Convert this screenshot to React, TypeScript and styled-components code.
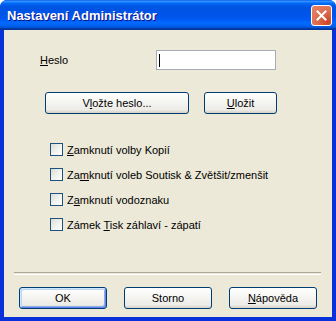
import { FC } from 'react';
import styled, { createGlobalStyle } from 'styled-components';

const GlobalStyle = createGlobalStyle`
  html, body {
    margin: 0;
    padding: 0;
    background: #ffffff;
  }
  body {
    font-family: 'Liberation Sans', Arial, sans-serif;
    font-size: 11px;
    color: #000;
  }
`;

const StyledWindow = styled.div`
  width: 336px;
  height: 321px;
  display: flex;
  flex-direction: column;
  box-sizing: border-box;
  border-radius: 7px 7px 0 0;
  overflow: hidden;
  background: #0831d9;
`;

const StyledTitleBar = styled.div`
  height: 30px;
  flex: none;
  display: flex;
  align-items: center;
  justify-content: space-between;
  padding: 0 4px 0 7px;
  background: linear-gradient(
    to bottom,
    #0058ee 0%,
    #3a93ff 4%,
    #288eff 6%,
    #127dff 8%,
    #036ffc 10%,
    #0262ee 14%,
    #0057e5 20%,
    #0054e3 24%,
    #0055eb 56%,
    #005bf5 66%,
    #026afe 76%,
    #0062ef 86%,
    #0052d6 92%,
    #0040ab 94%,
    #003092 100%
  );
`;

const StyledTitle = styled.div`
  color: #fff;
  font-family: 'Liberation Sans', Arial, sans-serif;
  font-weight: bold;
  font-size: 13px;
  text-shadow: 1px 1px 0 #0f1089;
  margin-top: 1px;
`;

const StyledClose = styled.div`
  width: 21px;
  height: 21px;
  box-sizing: border-box;
  border: 1px solid #fff;
  border-radius: 3px;
  background: radial-gradient(circle at 85% 85%, #cc4626 0%, #dc6a4c 45%, #e6866c 100%);
  display: flex;
  align-items: center;
  justify-content: center;
  margin-top: 1px;
`;

const StyledBody = styled.div`
  flex: 1;
  display: flex;
  flex-direction: column;
  margin: 0 4px 4px 4px;
  background: #ece9d8;
`;

const StyledPasswordRow = styled.div`
  display: flex;
  align-items: center;
  margin-top: 20px;
  padding-left: 36px;
`;

const StyledLabel = styled.div`
  width: 116px;
`;

const StyledTextBox = styled.div`
  width: 120px;
  height: 20px;
  box-sizing: border-box;
  border: 1px solid #a5acb2;
  background: #fff;
  padding: 3px 0 0 2px;
`;

const StyledCaret = styled.div`
  width: 1px;
  height: 13px;
  background: #000;
`;

const StyledButtonRow = styled.div<{ $top: number; $left: number; $gap: number }>`
  display: flex;
  margin-top: ${(p) => p.$top}px;
  padding-left: ${(p) => p.$left}px;
  gap: ${(p) => p.$gap}px;
`;

const StyledButton = styled.div<{ $width: number; $default?: boolean }>`
  width: ${(p) => p.$width}px;
  height: 22px;
  box-sizing: border-box;
  border: 1px solid #003c74;
  border-radius: 3px;
  background: linear-gradient(to bottom, #ffffff 0%, #f6f6f3 40%, #ecebe6 85%, #d6d0c5 100%);
  display: flex;
  align-items: center;
  justify-content: center;
  box-shadow: ${(p) =>
    p.$default
      ? 'inset 1px 1px 0 #cee7ff, inset -1px -1px 0 #6982ee, inset 2px 2px 0 #bcd4f6, inset -2px -2px 0 #89ade4'
      : 'none'};
`;

const StyledChecks = styled.div`
  display: flex;
  flex-direction: column;
  margin-top: 29px;
  padding-left: 46px;
  gap: 12px;
`;

const StyledCheckRow = styled.div`
  display: flex;
  align-items: center;
  height: 13px;
`;

const StyledBox = styled.div`
  width: 13px;
  height: 13px;
  box-sizing: border-box;
  border: 1px solid #1c5180;
  background: linear-gradient(135deg, #dcdcd7 0%, #f2f2ee 55%, #ffffff 100%);
  margin-right: 4px;
  flex: none;
`;

const StyledSeparator = styled.div`
  margin: auto 11px 0 10px;
  height: 1px;
  border-top: 1px solid #aca899;
  border-bottom: 1px solid #ffffff;
`;

const StyledFooter = styled.div`
  display: flex;
  gap: 17px;
  padding: 12px 0 8px 15px;
`;

const Key: FC<{ children: string }> = ({ children }) => <u>{children}</u>;

const CloseIcon: FC = () => (
  <svg width="11" height="11" viewBox="0 0 11 11">
    <path d="M1.5 1.5 L9.5 9.5 M9.5 1.5 L1.5 9.5" stroke="#fff" strokeWidth="2" strokeLinecap="square" />
  </svg>
);

const App: FC = () => {
  return (
    <>
      <GlobalStyle />
      <StyledWindow>
        <StyledTitleBar>
          <StyledTitle>Nastavení Administrátor</StyledTitle>
          <StyledClose>
            <CloseIcon />
          </StyledClose>
        </StyledTitleBar>
        <StyledBody>
          <StyledPasswordRow>
            <StyledLabel>
              <Key>H</Key>eslo
            </StyledLabel>
            <StyledTextBox>
              <StyledCaret />
            </StyledTextBox>
          </StyledPasswordRow>

          <StyledButtonRow $top={22} $left={41} $gap={15}>
            <StyledButton $width={144}>
              V<Key>l</Key>ožte heslo...
            </StyledButton>
            <StyledButton $width={73}>
              <Key>U</Key>ložit
            </StyledButton>
          </StyledButtonRow>

          <StyledChecks>
            <StyledCheckRow>
              <StyledBox />
              <span>
                <Key>Z</Key>amknutí volby Kopií
              </span>
            </StyledCheckRow>
            <StyledCheckRow>
              <StyledBox />
              <span>
                Za<Key>m</Key>knutí voleb Soutisk &amp; Zvětšit/zmenšit
              </span>
            </StyledCheckRow>
            <StyledCheckRow>
              <StyledBox />
              <span>
                Z<Key>a</Key>mknutí vodoznaku
              </span>
            </StyledCheckRow>
            <StyledCheckRow>
              <StyledBox />
              <span>
                Zámek <Key>T</Key>isk záhlaví - zápatí
              </span>
            </StyledCheckRow>
          </StyledChecks>

          <StyledSeparator />

          <StyledFooter>
            <StyledButton $width={88} $default>
              OK
            </StyledButton>
            <StyledButton $width={88}>Storno</StyledButton>
            <StyledButton $width={88}>
              <Key>N</Key>ápověda
            </StyledButton>
          </StyledFooter>
        </StyledBody>
      </StyledWindow>
    </>
  );
};

export default App;
